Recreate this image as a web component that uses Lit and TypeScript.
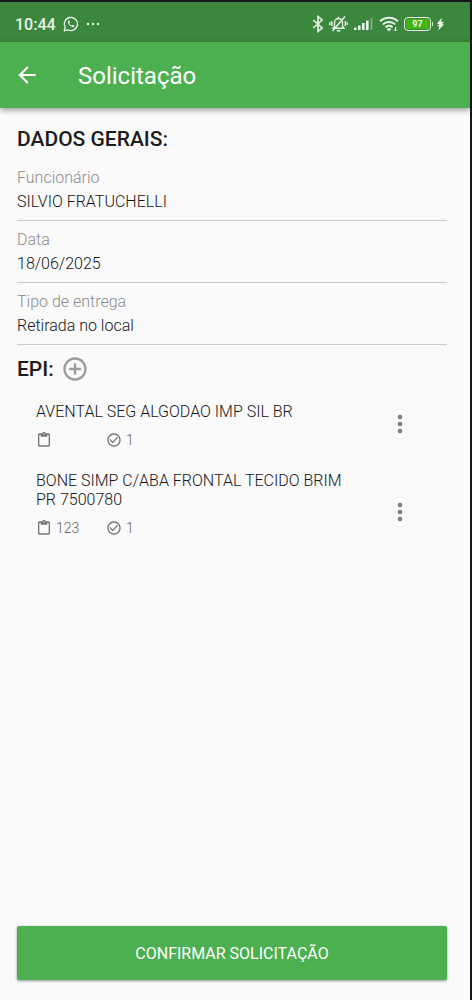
import { LitElement, html, css, svg } from "lit";
import { customElement, property } from "lit/decorators.js";

interface Field {
  label: string;
  value: string;
}

interface EpiItem {
  name: string;
  code: string;
  quantity: number;
}

@customElement("status-bar")
export class StatusBar extends LitElement {
  static styles = css`
    :host {
      display: flex;
      align-items: center;
      justify-content: space-between;
      height: 40px;
      padding: 4px 25px 0 15px;
      box-sizing: border-box;
      background: #3b873e;
      color: #eaf5ea;
      font-size: 16px;
      font-weight: 500;
    }
    .group {
      display: flex;
      align-items: center;
      gap: 7px;
    }
    .right {
      gap: 5px;
    }
    svg {
      display: block;
      flex: none;
    }
    .power {
      display: flex;
      align-items: center;
      gap: 3px;
    }
    .battery {
      display: flex;
      align-items: center;
      gap: 1px;
    }
    .battery::after {
      content: "";
      width: 1px;
      height: 4px;
      background: #d9ecd9;
    }
    .cell {
      width: 27px;
      height: 14px;
      box-sizing: border-box;
      border: 1px solid #e4f2e4;
      border-radius: 4px;
      padding: 1px;
    }
    .charge {
      display: block;
      height: 10px;
      border-radius: 2px;
      background: #43b314;
      font-size: 9px;
      line-height: 10px;
      text-align: center;
      font-weight: 700;
    }
  `;

  render() {
    return html`
      <div class="group">
        <span>10:44</span>
        <svg width="16" height="16" viewBox="0 0 16 16" fill="none" stroke="currentColor" stroke-width="1.3">
          <path d="M1.2 14.8l1-3.5a6.6 6.6 0 1 1 2.6 2.5z" stroke-linejoin="round" />
          <path d="M5.3 4.6c-1 1.2-.3 3 1.300 4.700s3.600 2.400 4.600 1.300l.2-1-1.700-.9-1 .9c-1.100-.4-2-1.300-2.400-2.300l.7-.9-.7-1.800z" fill="currentColor" stroke="none" />
        </svg>
        <svg width="14" height="4" viewBox="0 0 14 4" fill="currentColor">
          <circle cx="2" cy="2" r="1.200" /><circle cx="7" cy="2" r="1.200" /><circle cx="12" cy="2" r="1.200" />
        </svg>
      </div>
      <div class="group right">
        <svg width="12" height="18" viewBox="0 0 12 18" fill="none" stroke="currentColor" stroke-width="1.600">
          <path d="M1.200 5l9 8-4.200 3.500V1.500L10.200 5l-9 8" />
        </svg>
        <svg width="19" height="18" viewBox="0 0 19 18" fill="none" stroke="currentColor" stroke-width="1.400">
          <path d="M4 13.300h11l-1.500-2V7.500a4 4 0 0 0-8 0v3.800zM9.500 3.500V1.800M7.800 15.800h3.400M16 1.500L3.500 16M2.700 6v5M.8 7.300v2.600M16.300 6v5M18.200 7.300v2.600" />
        </svg>
        <svg width="21" height="14" viewBox="0 0 21 14" fill="currentColor">
          <rect x="1" y="10.500" width="2.600" height="2.500" />
          <rect x="5" y="8.500" width="2.600" height="4.500" />
          <rect x="9" y="6" width="2.600" height="7" />
          <rect x="13" y="3.500" width="2.600" height="9.500" />
          <rect x="17.500" y="1" width="2" height="12" opacity=".35" />
        </svg>
        <svg width="20" height="16" viewBox="0 0 20 16" fill="none" stroke="currentColor" stroke-width="2">
          <path d="M1 5.300a13 13 0 0 1 18 0M3.800 8.400a9 9 0 0 1 12.400 0M6.500 11.300a5 5 0 0 1 7 0" />
          <path d="M10 15.500l-2.300-2.300a3.200 3.200 0 0 1 4.600 0z" fill="currentColor" stroke="none" />
          <path d="M16.500 11v4M15 13.500l1.500 1.500 1.500-1.500" stroke-width="1" />
        </svg>
        <div class="power">
          <div class="battery"><div class="cell"><span class="charge">97</span></div></div>
          <svg width="9" height="14" viewBox="0 0 9 14" fill="currentColor">
            <path d="M5.800.8L.8 7h2.700L.8 9.300h2.400L2.600 13.200l5.600-6H5.700L8.300 5H5.200z" />
          </svg>
        </div>
      </div>
    `;
  }
}

@customElement("epi-item")
export class EpiItemRow extends LitElement {
  @property({ attribute: false }) item!: EpiItem;

  static styles = css`
    :host {
      display: flex;
      align-items: flex-end;
      justify-content: space-between;
    }
    .body {
      flex: 1;
      max-width: 328px;
    }
    .name {
      margin: 0 0 9px;
      font-size: 16px;
      line-height: 19px;
      font-weight: 300;
      color: #161616;
    }
    .meta {
      display: grid;
      grid-template-columns: 70px auto;
      justify-content: start;
      line-height: 20px;
      font-size: 14px;
      font-weight: 300;
      color: #616161;
    }
    .entry {
      display: flex;
      align-items: center;
      gap: 4px;
    }
    svg {
      display: block;
      fill: #757575;
    }
    .more {
      display: grid;
      place-items: center;
      width: 48px;
      height: 52px;
      margin-right: 23px;
      padding: 0;
      border: 0;
      background: none;
      cursor: pointer;
    }
    .more svg {
      fill: #808080;
    }
  `;

  render() {
    return html`
      <div class="body">
        <p class="name">${this.item.name}</p>
        <div class="meta">
          <span class="entry">
            <svg width="16" height="16" viewBox="0 0 24 24">
              <path d="M19 2h-4.180C14.400.84 13.300 0 12 0c-1.300 0-2.400.84-2.820 2H5c-1.100 0-2 .9-2 2v16c0 1.100.9 2 2 2h14c1.100 0 2-.9 2-2V4c0-1.100-.9-2-2-2zm-7 0c.55 0 1 .45 1 1s-.45 1-1 1-1-.45-1-1 .45-1 1-1zm7 18H5V4h2v3h10V4h2v16z" />
            </svg>
            ${this.item.code}
          </span>
          <span class="entry">
            <svg width="16" height="16" viewBox="0 0 24 24">
              <path d="M16.590 7.580L10 14.170l-3.590-3.580L5 12l5 5 8-8zM12 2C6.480 2 2 6.480 2 12s4.480 10 10 10 10-4.480 10-10S17.520 2 12 2zm0 18c-4.420 0-8-3.580-8-8s3.580-8 8-8 8 3.580 8 8-3.580 8-8 8z" />
            </svg>
            ${this.item.quantity}
          </span>
        </div>
      </div>
      <button class="more" aria-label="Mais opções">
        <svg width="28" height="28" viewBox="0 0 24 24">
          ${[6, 12, 18].map((y) => svg`<circle cx="12" cy=${y} r="2" />`)}
        </svg>
      </button>
    `;
  }
}

@customElement("app-root")
export class AppRoot extends LitElement {
  private fields: Field[] = [
    { label: "Funcionário", value: "SILVIO FRATUCHELLI" },
    { label: "Data", value: "18/06/2025" },
    { label: "Tipo de entrega", value: "Retirada no local" },
  ];

  private items: EpiItem[] = [
    { name: "AVENTAL SEG ALGODAO IMP SIL BR", code: "", quantity: 1 },
    { name: "BONE SIMP C/ABA FRONTAL TECIDO BRIM PR 7500780", code: "123", quantity: 1 },
  ];

  static styles = css`
    :host {
      display: flex;
      flex-direction: column;
      min-height: 100vh;
      box-sizing: border-box;
      border-top: 2px solid #151719;
      border-right: 2px solid #151719;
      background: #fafafa;
      color: #1c1c1c;
      font-family: Roboto, "Liberation Sans", sans-serif;
    }
    .appbar {
      display: flex;
      align-items: center;
      gap: 38px;
      height: 66px;
      padding: 0 14px;
      background: #4caf50;
      color: #fff;
      box-shadow: 0 2px 6px rgba(0, 0, 0, 0.4);
    }
    .title {
      margin: 0;
      padding-top: 2px;
      font-size: 24px;
      font-weight: 400;
    }
    .icon-button {
      display: grid;
      place-items: center;
      padding: 4px;
      border: 0;
      background: none;
      color: inherit;
      cursor: pointer;
    }
    .back {
      padding: 0;
    }
    svg {
      display: block;
      fill: currentColor;
    }
    main {
      flex: 1;
      padding: 18px 23px 0 17px;
    }
    h2 {
      margin: 0;
      font-size: 21px;
      line-height: 26px;
      font-weight: 500;
    }
    .fields {
      margin: 7px 0 0;
    }
    .field {
      padding: 7px 0 6px;
      border-bottom: 1px solid #cbcbcb;
      font-size: 16px;
      line-height: 24px;
      font-weight: 300;
    }
    dt {
      color: #8c8c8c;
    }
    dd {
      margin: 0;
      color: #161616;
    }
    .epi-head {
      display: flex;
      align-items: center;
      gap: 3px;
      height: 47px;
    }
    .add {
      color: #9a9a9a;
    }
    .list {
      display: flex;
      flex-direction: column;
      gap: 21px;
      margin: 6px 0 0;
      padding: 0 0 0 19px;
      list-style: none;
    }
    footer {
      padding: 20px 23px 20px 17px;
    }
    .confirm {
      display: block;
      width: 100%;
      height: 54px;
      border: 0;
      border-radius: 2px;
      background: #4caf50;
      color: #fff;
      font: 400 16px Roboto, "Liberation Sans", sans-serif;
      box-shadow: 0 1px 3px rgba(0, 0, 0, 0.4);
      cursor: pointer;
    }
  `;

  render() {
    return html`
      <status-bar></status-bar>
      <header class="appbar">
        <button class="icon-button back" aria-label="Voltar">
          <svg width="26" height="26" viewBox="0 0 24 24">
            <path d="M20 11H7.830l5.590-5.590L12 4l-8 8 8 8 1.410-1.410L7.830 13H20v-2z" />
          </svg>
        </button>
        <h1 class="title">Solicitação</h1>
      </header>
      <main>
        <h2>DADOS GERAIS:</h2>
        <dl class="fields">
          ${this.fields.map(
            (f) => html`<div class="field"><dt>${f.label}</dt><dd>${f.value}</dd></div>`
          )}
        </dl>
        <div class="epi-head">
          <h2>EPI:</h2>
          <button class="icon-button add" aria-label="Adicionar EPI">
            <svg width="28" height="28" viewBox="0 0 24 24">
              <path d="M13 7h-2v4H7v2h4v4h2v-4h4v-2h-4V7zm-1-5C6.480 2 2 6.480 2 12s4.480 10 10 10 10-4.480 10-10S17.520 2 12 2zm0 18c-4.410 0-8-3.590-8-8s3.590-8 8-8 8 3.590 8 8-3.590 8-8 8z" />
            </svg>
          </button>
        </div>
        <ul class="list">
          ${this.items.map((item) => html`<li><epi-item .item=${item}></epi-item></li>`)}
        </ul>
      </main>
      <footer>
        <button class="confirm">CONFIRMAR SOLICITAÇÃO</button>
      </footer>
    `;
  }
}
